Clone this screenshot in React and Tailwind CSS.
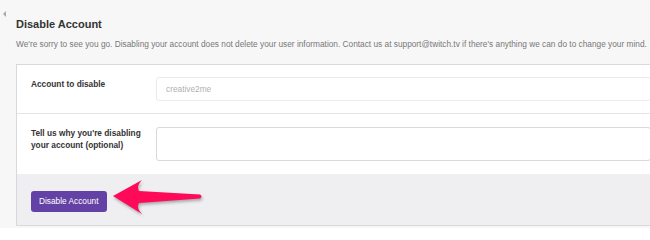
export default function App() {
  return (
    <div
      className="relative w-[650px] h-[228px] overflow-hidden bg-[#f7f7f8] pl-4 pt-[17px] text-[#333]"
      style={{ fontFamily: '"Liberation Sans", Arial, sans-serif' }}
    >
      {/* collapse tab */}
      <div className="absolute left-[3px] top-[11px] w-0 h-0 border-y-[3px] border-y-transparent border-r-[3px] border-r-[#a8a8a8]" />

      <h2 className="text-[11px] leading-[14px] font-bold text-[#333]">
        Disable Account
      </h2>
      <p className="mt-[6.5px] text-[8.3px] leading-[12px] text-[#777] whitespace-nowrap">
        We're sorry to see you go. Disabling your account does not delete your
        user information. Contact us at support@twitch.tv if there's anything
        we can do to change your mind.
      </p>

      {/* card */}
      <div className="mt-[14.5px] -mr-4 border border-[#dad8de] bg-white">
        <div className="flex px-[14px] pt-[12px] pb-[12px] border-b border-[#e5e5e8]">
          <label className="w-[125px] shrink-0 pr-[10px] pt-[1px] text-[8.3px] leading-[12px] font-bold text-[#333]">
            Account to disable
          </label>
          <div className="flex-1 h-[24px] flex items-center pl-[9px] border border-[#ebebed] rounded-[3px] bg-white text-[8.3px] text-[#b0b0b0]">
            creative2me
          </div>
        </div>

        <div className="flex px-[14px] pt-[13px] pb-[13px]">
          <label className="w-[125px] shrink-0 pr-[10px] pt-0 text-[8.3px] leading-[12px] font-bold text-[#333]">
            Tell us why you're disabling your account (optional)
          </label>
          <div className="flex-1 h-[34px] border border-[#dad8de] rounded-[3px] bg-white" />
        </div>

        <div className="bg-[#efeef1] px-[14px] pt-[13px] pb-[13px]">
          <button className="h-[21px] px-[8px] rounded-[3px] bg-[#6441a4] text-white text-[8.3px] leading-[21px]">
            Disable Account
          </button>
        </div>
      </div>

      {/* pointer arrow */}
      <svg
        className="absolute left-[108px] top-[176px] w-[100px] h-[42px] drop-shadow-[1px_2px_1.5px_rgba(0,0,0,0.3)]"
        viewBox="108 176 100 42"
      >
        <path
          d="M113 196 L142 180 Q136 186 139 191 L200 194.5 Q203 196.5 200 198.5 L139 203 Q136 208 142 214 Z"
          fill="#fe0a58"
        />
      </svg>
    </div>
  );
}
